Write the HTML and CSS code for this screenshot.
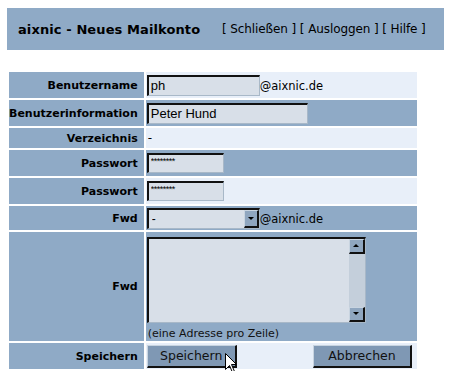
FILE: index.html
```html
<!DOCTYPE html>
<html lang="de">
<head>
  <meta charset="UTF-8">
  <title>aixnic - Neues Mailkonto</title>
  <link rel="stylesheet" href="styles.css">
</head>
<body>
  <div class="topbar">
    <span class="title">aixnic - Neues Mailkonto</span>
    <span class="links">[ <a href="#">Schließen</a> ] [ <a href="#">Ausloggen</a> ] [ <a href="#">Hilfe</a> ]</span>
  </div>

  <form class="account-form" onsubmit="return false;">
    <table class="form-table">
      <tr class="h26">
        <th>Benutzername</th>
        <td class="light"><input type="text" class="field w-user" value="ph"><span class="domain">@aixnic.de</span></td>
      </tr>
      <tr class="h26">
        <th>Benutzerinformation</th>
        <td class="dark"><input type="text" class="field w-info" value="Peter Hund"></td>
      </tr>
      <tr class="h20">
        <th>Verzeichnis</th>
        <td class="light"><span class="plain">-</span></td>
      </tr>
      <tr class="h26">
        <th>Passwort</th>
        <td class="dark"><input type="text" class="field pass w-pass" value="********"></td>
      </tr>
      <tr class="h26">
        <th>Passwort</th>
        <td class="light"><input type="text" class="field pass w-pass" value="********"></td>
      </tr>
      <tr class="h24">
        <th>Fwd</th>
        <td class="dark">
          <span class="combo">
            <select class="combo-select"><option>-</option></select>
            <span class="combo-btn"><span class="tri-down"></span></span>
          </span><span class="domain">@aixnic.de</span>
        </td>
      </tr>
      <tr class="h109">
        <th>Fwd</th>
        <td class="dark">
          <div class="memo">
            <textarea class="memo-text"></textarea>
            <div class="memo-scroll">
              <span class="sb-btn"><span class="tri-up"></span></span>
              <span class="sb-btn"><span class="tri-down"></span></span>
            </div>
          </div>
          <div class="hint">(eine Adresse pro Zeile)</div>
        </td>
      </tr>
      <tr class="h26">
        <th>Speichern</th>
        <td class="light">
          <div class="actions">
            <button class="btn w-save">Speichern</button>
            <button class="btn w-cancel">Abbrechen</button>
          </div>
        </td>
      </tr>
    </table>
  </form>

  <svg class="cursor" width="13" height="22" viewBox="0 0 13 22">
    <path d="M0.5 0.5 L0.5 16.5 L4.5 12.5 L7.5 19.5 L9.5 18.5 L6.5 11.5 L11.5 11.5 Z" fill="#fff" stroke="#000" stroke-width="1"/>
  </svg>
</body>
</html>
```

FILE: styles.css
```css
body {
  margin: 8px 0 0 7px;
  background-color: #fff;
  color: #000;
  font-family: "DejaVu Sans", Verdana, sans-serif;
  font-size: 12px;
  position: relative;
}

.topbar {
  width: 437px;
  height: 42px;
  background-color: #8faac6;
  display: flex;
  align-items: center;
  box-sizing: border-box;
  padding: 0 0 0 11px;
}
.title {
  font-weight: bold;
  font-size: 13px;
  letter-spacing: 0.1px;
  width: 204px;
  flex-shrink: 0;
  white-space: nowrap;
}
.links {
  font-family: "DejaVu Sans", sans-serif;
  font-size: 12px;
  letter-spacing: -0.1px;
  white-space: nowrap;
}
.links a {
  color: #000;
  text-decoration: none;
}

.account-form {
  margin: 20px 0 0 0;
}
.form-table {
  border-spacing: 2px;
  width: 412px;
}
.form-table th,
.form-table td {
  padding: 0;
}
.form-table th {
  width: 134px;
  background-color: #8faac6;
  text-align: right;
  padding-right: 6px;
  box-sizing: border-box;
  font-size: 11px;
  font-weight: bold;
  white-space: nowrap;
}
.form-table td {
  padding-left: 1px;
  vertical-align: middle;
}
.light { background-color: #e8eff9; }
.dark { background-color: #8faac6; }

.h26 { height: 26px; }
.h20 { height: 20px; }
.h24 { height: 24px; }
.h109 { height: 109px; }

.field {
  height: 21px;
  box-sizing: border-box;
  background-color: #d8dfe8;
  border-style: solid;
  border-width: 2px 1px 1px 2px;
  border-color: #111 #a8b8c8 #a8b8c8 #111;
  font-family: "Liberation Sans", Arial, sans-serif;
  font-size: 13px;
  padding: 0 2px;
  margin: 0;
  vertical-align: middle;
}
.pass {
  height: 20px;
  font-size: 9px;
  letter-spacing: -0.5px;
  padding: 0 2px 5px 2px;
}
.w-user { width: 113px; }
.w-info { width: 161px; }
.w-pass { width: 77px; }

.domain {
  vertical-align: middle;
  font-size: 11.5px;
}
.plain {
  padding-left: 1px;
}

.combo {
  display: inline-flex;
  width: 113px;
  height: 21px;
  box-sizing: border-box;
  background-color: #d8dfe8;
  border-style: solid;
  border-width: 2px 1px 1px 2px;
  border-color: #111 #a8b8c8 #a8b8c8 #111;
  vertical-align: middle;
}
.combo-select {
  flex: 1;
  appearance: none;
  -webkit-appearance: none;
  border: none;
  background: transparent;
  font-family: "Liberation Sans", Arial, sans-serif;
  font-size: 12px;
  padding: 0 3px;
  outline: none;
}
.combo-btn {
  width: 15px;
  background-color: #8fa6bf;
  border-style: solid;
  border-width: 1px 2px 2px 1px;
  border-color: #c8d4e0 #111 #111 #c8d4e0;
  box-sizing: border-box;
  display: flex;
  align-items: center;
  justify-content: center;
}
.tri-down {
  width: 0;
  height: 0;
  border-left: 3px solid transparent;
  border-right: 3px solid transparent;
  border-top: 3px solid #000;
}
.tri-up {
  width: 0;
  height: 0;
  border-left: 3px solid transparent;
  border-right: 3px solid transparent;
  border-bottom: 3px solid #000;
}

.memo {
  display: flex;
  width: 219px;
  height: 86px;
  box-sizing: border-box;
  border-style: solid;
  border-width: 2px 1px 1px 2px;
  border-color: #111 #a8b8c8 #a8b8c8 #111;
  background-color: #d8dfe8;
  margin-top: 3px;
}
.memo-text {
  flex: 1;
  border: none;
  background: transparent;
  resize: none;
  outline: none;
  font-family: "Liberation Sans", Arial, sans-serif;
  font-size: 12px;
}
.memo-scroll {
  width: 16px;
  background-color: #c4cfdb;
  display: flex;
  flex-direction: column;
  justify-content: space-between;
}
.sb-btn {
  height: 15px;
  background-color: #8fa6bf;
  border-style: solid;
  border-width: 1px 2px 2px 1px;
  border-color: #c8d4e0 #111 #111 #c8d4e0;
  box-sizing: border-box;
  display: flex;
  align-items: center;
  justify-content: center;
}
.hint {
  font-size: 11px;
  padding: 4px 0 0 1px;
  color: #111;
}

.actions {
  display: flex;
  justify-content: space-between;
  padding-right: 5px;
}
.btn {
  height: 23px;
  background-color: #7f98b4;
  border-style: solid;
  border-width: 1px 2px 2px 1px;
  border-color: #c8d4e0 #111 #111 #c8d4e0;
  font-family: "DejaVu Sans", Verdana, sans-serif;
  font-size: 12.5px;
  color: #111;
  padding: 0;
  margin: 0;
}
.w-save { width: 90px; }
.w-cancel { width: 99px; }

.cursor {
  position: absolute;
  left: 218px;
  top: 345px;
}
```
